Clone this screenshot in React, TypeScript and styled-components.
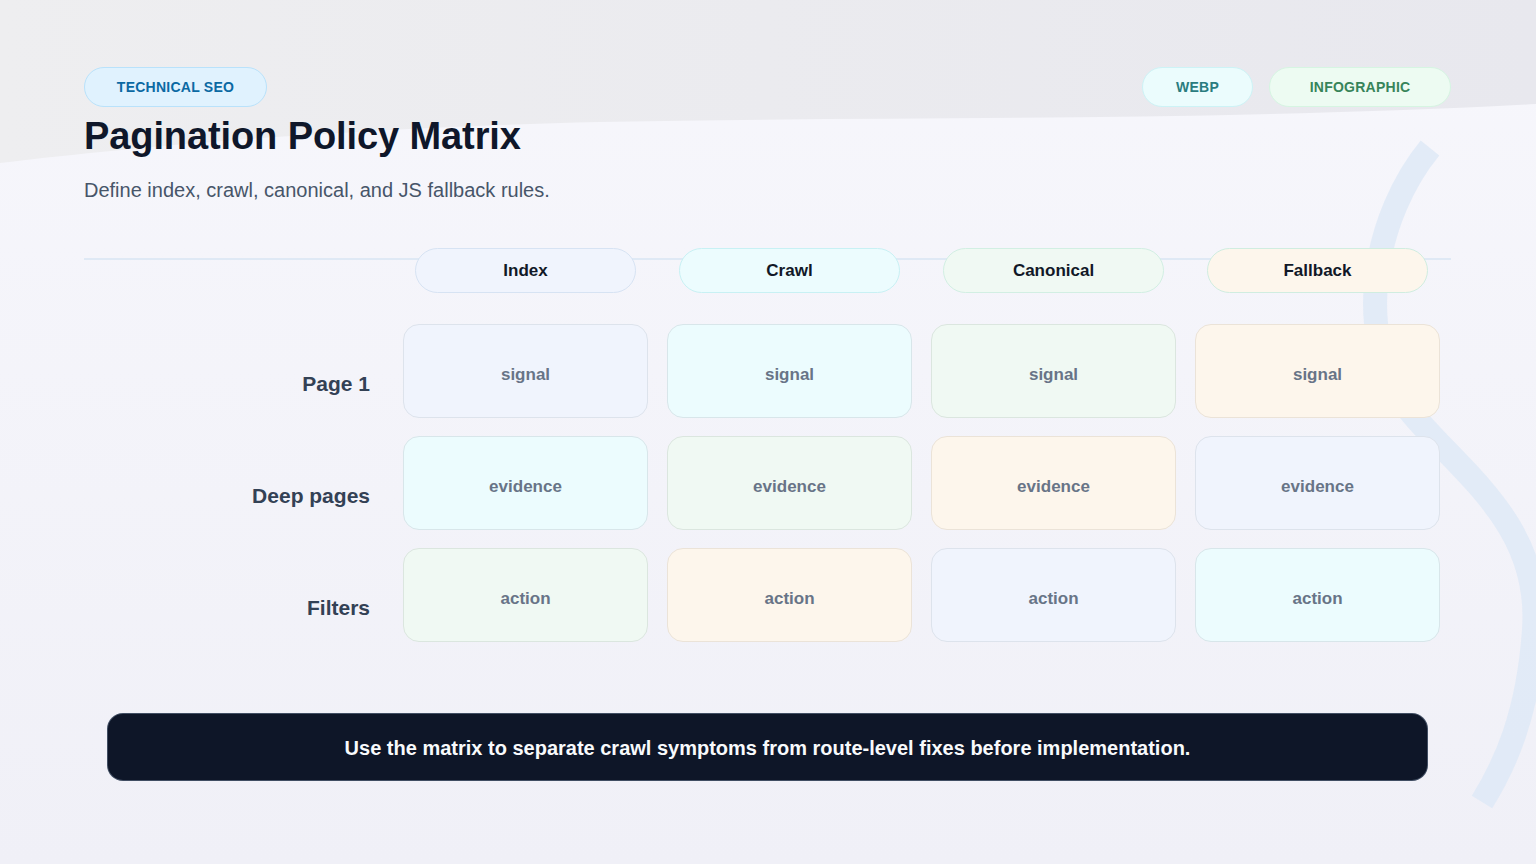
import React from "react";
import styled, { createGlobalStyle } from "styled-components";

type Tone = "blue" | "cyan" | "green" | "amber";

const tones: Record<Tone, { bg: string; border: string; head: string }> = {
  blue: { bg: "#f0f4fd", border: "#dde3ec", head: "#d7e3f3" },
  cyan: { bg: "#ecfcfe", border: "#d8e6ea", head: "#c8f1f4" },
  green: { bg: "#f0f9f3", border: "#dbe6df", head: "#d2efe3" },
  amber: { bg: "#fdf6ec", border: "#ebe3d8", head: "#d0ede0" },
};

const toneOrder: Tone[] = ["blue", "cyan", "green", "amber"];

const columns = ["Index", "Crawl", "Canonical", "Fallback"];
const rows = [
  { label: "Page 1", value: "signal" },
  { label: "Deep pages", value: "evidence" },
  { label: "Filters", value: "action" },
];

const GlobalStyle = createGlobalStyle`
  body {
    margin: 0;
    background: #f3f3f9;
    font-family: "Liberation Sans", Arial, sans-serif;
  }
`;

const Page = styled.div`
  position: relative;
  min-height: 864px;
  overflow: hidden;
  padding: 67px 85px 0 84px;
  box-sizing: border-box;
`;

const Backdrop = styled.svg`
  position: absolute;
  inset: 0;
  width: 100%;
  height: 100%;
  z-index: 0;
`;

const Content = styled.div`
  position: relative;
  z-index: 1;
  display: flex;
  flex-direction: column;
`;

const TopBar = styled.header`
  display: flex;
  justify-content: space-between;
  align-items: flex-start;
`;

const TagGroup = styled.div`
  display: flex;
  gap: 16px;
`;

const Tag = styled.span<{ $bg: string; $border: string; $color: string; $width: number }>`
  display: inline-flex;
  align-items: center;
  justify-content: center;
  box-sizing: border-box;
  width: ${(p) => p.$width}px;
  height: 40px;
  border-radius: 20px;
  background: ${(p) => p.$bg};
  border: 1.5px solid ${(p) => p.$border};
  color: ${(p) => p.$color};
  font-size: 14px;
  font-weight: 700;
  letter-spacing: 0.25px;
`;

const Title = styled.h1`
  margin: 7px 0 0;
  font-size: 38px;
  line-height: 44px;
  font-weight: 700;
  color: #0f172a;
  letter-spacing: -0.1px;
`;

const Subtitle = styled.p`
  margin: 20px 0 0;
  font-size: 20px;
  line-height: 24px;
  color: #475569;
`;

const Matrix = styled.section`
  margin-top: 46px;
  display: flex;
  flex-direction: column;
  gap: 31px;
`;

const gridCols = `300px repeat(4, 245px)`;

const HeaderRow = styled.div`
  position: relative;
  display: grid;
  grid-template-columns: ${gridCols};
  column-gap: 19px;

  &::before {
    content: "";
    position: absolute;
    left: 0;
    right: 0;
    top: 10px;
    height: 2px;
    background: #dfe9f5;
  }
`;

const ColumnHead = styled.div<{ $tone: Tone }>`
  position: relative;
  margin: 0 12px;
  height: 45px;
  box-sizing: border-box;
  border-radius: 23px;
  display: flex;
  align-items: center;
  justify-content: center;
  background: ${(p) => tones[p.$tone].bg};
  border: 1.5px solid ${(p) => tones[p.$tone].head};
  color: #111827;
  font-size: 17px;
  font-weight: 700;
`;

const Body = styled.div`
  display: grid;
  grid-template-columns: ${gridCols};
  column-gap: 19px;
  row-gap: 18px;
`;

const RowLabel = styled.div`
  display: flex;
  align-items: center;
  justify-content: flex-end;
  padding: 26px 14px 0 0;
  font-size: 21px;
  font-weight: 700;
  color: #334155;
`;

const Cell = styled.div<{ $tone: Tone }>`
  height: 94px;
  box-sizing: border-box;
  border-radius: 16px;
  padding-top: 8px;
  display: flex;
  align-items: center;
  justify-content: center;
  background: ${(p) => tones[p.$tone].bg};
  border: 1.5px solid ${(p) => tones[p.$tone].border};
  color: #687487;
  font-size: 17px;
  font-weight: 700;
`;

const Callout = styled.footer`
  margin: 71px 23px 0;
  height: 68px;
  box-sizing: border-box;
  border-radius: 16px;
  background: #0e1628;
  border: 1px solid rgba(100, 116, 139, 0.6);
  display: flex;
  align-items: center;
  justify-content: center;
  padding-top: 3px;
  color: #f8fafc;
  font-size: 20px;
  font-weight: 700;
`;

export default function App() {
  return (
    <>
      <GlobalStyle />
      <Page>
        <Backdrop viewBox="0 0 1536 864" preserveAspectRatio="none" aria-hidden>
          <defs>
            <linearGradient id="lower" x1="0" y1="0" x2="0" y2="1">
              <stop offset="0" stopColor="#f7f7fc" />
              <stop offset="1" stopColor="#f0f0f7" />
            </linearGradient>
            <linearGradient id="band" x1="0" y1="0" x2="1" y2="0">
              <stop offset="0" stopColor="#eeeef0" />
              <stop offset="1" stopColor="#e8e8ee" />
            </linearGradient>
          </defs>
          <rect width="1536" height="864" fill="url(#lower)" />
          <path d="M0 163 C150 145 350 128 600 122 C900 116 1200 122 1536 104 V0 H0 Z" fill="url(#band)" />
          <path
            d="M1430 148 C1375 215 1352 330 1405 405 C1455 470 1542 520 1534 630 C1528 715 1505 765 1482 802"
            fill="none"
            stroke="#dde8f6"
            strokeOpacity="0.8"
            strokeWidth="24"
          />
        </Backdrop>
        <Content>
          <TopBar>
            <Tag $bg="#e0f2fe" $border="#b9e2fb" $color="#0b69a3" $width={183}>
              TECHNICAL SEO
            </Tag>
            <TagGroup>
              <Tag $bg="#ebfcfd" $border="#cdf3f6" $color="#2a7c7f" $width={111}>
                WEBP
              </Tag>
              <Tag $bg="#edfbf2" $border="#d6f5e2" $color="#37845a" $width={182}>
                INFOGRAPHIC
              </Tag>
            </TagGroup>
          </TopBar>
          <Title>Pagination Policy Matrix</Title>
          <Subtitle>Define index, crawl, canonical, and JS fallback rules.</Subtitle>
          <Matrix>
            <HeaderRow>
              <div />
              {columns.map((c, i) => (
                <ColumnHead key={c} $tone={toneOrder[i]}>
                  {c}
                </ColumnHead>
              ))}
            </HeaderRow>
            <Body>
              {rows.map((r, ri) => (
                <React.Fragment key={r.label}>
                  <RowLabel>{r.label}</RowLabel>
                  {columns.map((c, ci) => (
                    <Cell key={c} $tone={toneOrder[(ri + ci) % 4]}>
                      {r.value}
                    </Cell>
                  ))}
                </React.Fragment>
              ))}
            </Body>
          </Matrix>
          <Callout>
            Use the matrix to separate crawl symptoms from route-level fixes before implementation.
          </Callout>
        </Content>
      </Page>
    </>
  );
}
